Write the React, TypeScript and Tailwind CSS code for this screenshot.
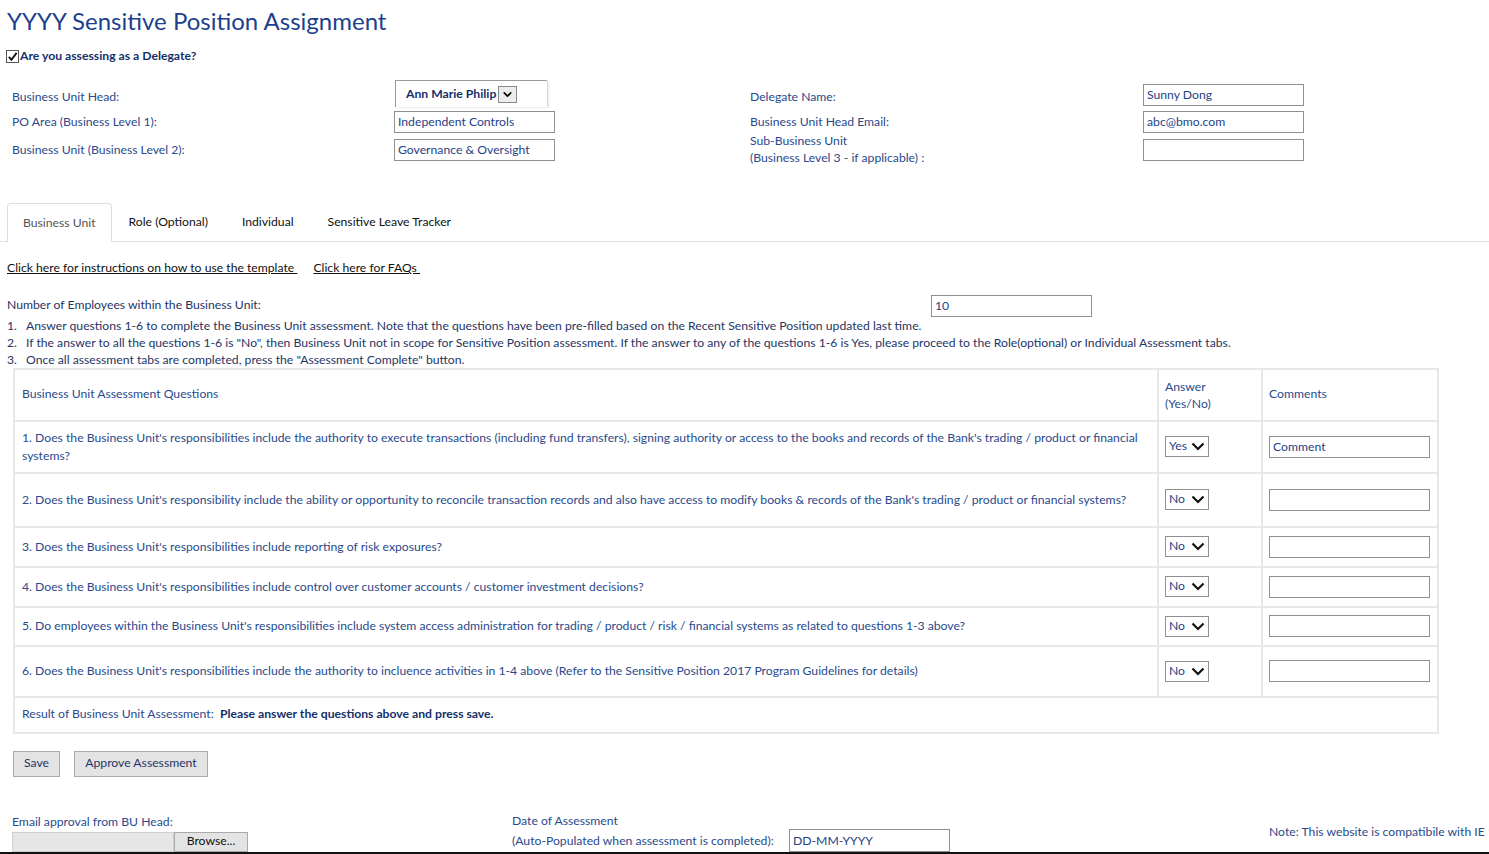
import React from 'react';
import { ChevronDown } from 'lucide-react';

const font = { fontFamily: 'Lato, "Liberation Sans", sans-serif' };

function TextBox({ value, className = '' }: { value?: string; className?: string }) {
  return (
    <div
      className={`h-[22px] w-[161px] border border-[#8f8f8f] bg-white pl-[3px] leading-[20px] text-[#1f3f86] ${className}`}
    >
      {value}
    </div>
  );
}

function Chevron() {
  return (
    <svg viewBox="0 0 14 9" className="h-[9px] w-[14px]">
      <path d="M1.5 1.5 L7 7 L12.5 1.5" fill="none" stroke="#111" strokeWidth="2.2" />
    </svg>
  );
}

function YesNo({ value }: { value: string }) {
  return (
    <div className="flex h-[21px] w-[44px] items-center justify-between border border-[#8f8f8f] bg-white pl-[3px] pr-[3px] text-[#1f3f86]">
      <span>{value}</span>
      <Chevron />
    </div>
  );
}

const questions = [
  {
    text: "1. Does the Business Unit's responsibilities include the authority to execute transactions (including fund transfers), signing authority or access to the books and records of the Bank's trading / product or financial systems?",
    answer: 'Yes',
    comment: 'Comment',
    h: 'h-[52px]',
  },
  {
    text: "2. Does the Business Unit's responsibility include the ability or opportunity to reconcile transaction records and also have access to modify books & records of the Bank's trading / product or financial systems?",
    answer: 'No',
    comment: '',
    h: 'h-[54px]',
  },
  {
    text: "3. Does the Business Unit's responsibilities include reporting of risk exposures?",
    answer: 'No',
    comment: '',
    h: 'h-[40px]',
  },
  {
    text: "4. Does the Business Unit's responsibilities include control over customer accounts / customer investment decisions?",
    answer: 'No',
    comment: '',
    h: 'h-[40px]',
  },
  {
    text: "5. Do employees within the Business Unit's responsibilities include system access administration for trading / product / risk / financial systems as related to questions 1-3 above?",
    answer: 'No',
    comment: '',
    h: 'h-[39px]',
  },
  {
    text: '6. Does the Business Unit\'s responsibilities include the authority to incluence activities in 1-4 above (Refer to the Sensitive Position 2017 Program Guidelines for details)',
    answer: 'No',
    comment: '',
    h: 'h-[51px]',
  },
];

export default function App() {
  return (
    <div className="flex h-screen flex-col overflow-hidden bg-white text-[12.2px] text-[#2a4a8c]" style={font}>
      <div className="flex-1">
        {/* Title */}
        <h1 className="pl-[7px] pt-[5px] text-[24px] leading-[32px] text-[#1e3f8c]">
          YYYY Sensitive Position Assignment
        </h1>

        <div className="mt-[10px] flex items-center pl-[6px]">
          <div className="flex h-[13px] w-[13px] items-center justify-center border border-[#555] bg-white">
            <svg viewBox="0 0 12 12" className="h-[11px] w-[11px]">
              <path d="M2 6.5 L4.8 9.5 L10.5 2" fill="none" stroke="#111" strokeWidth="2" />
            </svg>
          </div>
          <span className="ml-[1px] font-bold text-[#14306a]">Are you assessing as a Delegate?</span>
        </div>

        {/* Header form */}
        <div className="mt-[15px] grid grid-cols-[382px_161px_195px_393px_161px] pl-[12px]">
          <div className="flex h-[27px] items-center pt-[6px]">Business Unit Head:</div>
          <div className="h-[27px]">
            <div className="ml-[1px] flex h-[27px] w-[153px] items-center rounded-tr-[2px] border-l border-t border-r border-l-[#9a9a9a] border-t-[#9a9a9a] border-r-[#d8d8d8] pl-[10px] shadow-[1px_1px_2px_rgba(0,0,0,0.08)]">
              <span className="font-bold text-[#14306a]">Ann Marie Philip</span>
              <div className="ml-[2px] flex h-[17px] w-[19px] items-center justify-center border border-[#8a8a8a] bg-[#ececec]">
                <ChevronDown className="h-[13px] w-[13px] text-black" strokeWidth={3} />
              </div>
            </div>
          </div>
          <div />
          <div className="flex h-[27px] items-center pt-[6px]">Delegate Name:</div>
          <div className="flex h-[27px] items-start pt-[4px]">
            <TextBox value="Sunny Dong" />
          </div>

          <div className="mt-[4px] flex h-[21px] items-center pt-[1px]">PO Area (Business Level 1):</div>
          <div className="mt-[4px]">
            <TextBox value="Independent Controls" />
          </div>
          <div />
          <div className="mt-[4px] flex h-[21px] items-center pt-[1px]">Business Unit Head Email:</div>
          <div className="mt-[4px]">
            <TextBox value="abc@bmo.com" />
          </div>

          <div className="mt-[6px] flex h-[21px] items-center pt-[1px]">Business Unit (Business Level 2):</div>
          <div className="mt-[6px]">
            <TextBox value="Governance & Oversight" />
          </div>
          <div />
          <div className="-mt-[1px] leading-[17px]">
            Sub-Business Unit
            <br />
            (Business Level 3 - if applicable) :
          </div>
          <div className="mt-[6px]">
            <TextBox />
          </div>
        </div>

        {/* Tabs */}
        <div className="mt-[37px] flex h-[39px] items-end border-b border-[#dedede] pl-[7px]">
          <div className="-mb-px flex h-[39px] items-center rounded-t-[4px] border border-b-0 border-[#dedede] bg-white px-[15px] text-[#555]">
            Business Unit
          </div>
          <div className="flex h-[39px] items-center px-[17px] text-[#111]">Role (Optional)</div>
          <div className="flex h-[39px] items-center px-[17px] text-[#111]">Individual</div>
          <div className="flex h-[39px] items-center px-[17px] text-[#111]">Sensitive Leave Tracker</div>
        </div>

        {/* Links */}
        <div className="mt-[17px] flex gap-[16px] pl-[7px] text-[#111]">
          <span className="underline">Click here for instructions on how to use the template&nbsp;</span>
          <span className="underline">Click here for FAQs&nbsp;</span>
        </div>

        {/* Employees + instructions */}
        <div className="mt-[17px] flex items-center pl-[7px] text-[#1f3565]">
          <span className="w-[924px] shrink-0">Number of Employees within the Business Unit:</span>
          <TextBox value="10" />
        </div>
        <ol className="pl-[7px] leading-[17px] text-[#1f3565]">
          <li className="flex">
            <span className="w-[19px] shrink-0">1.</span>
            Answer questions 1-6 to complete the Business Unit assessment. Note that the questions have been pre-filled based on the Recent Sensitive Position updated last time.
          </li>
          <li className="flex">
            <span className="w-[19px] shrink-0">2.</span>
            If the answer to all the questions 1-6 is "No", then Business Unit not in scope for Sensitive Position assessment. If the answer to any of the questions 1-6 is Yes, please proceed to the Role(optional) or Individual Assessment tabs.
          </li>
          <li className="flex">
            <span className="w-[19px] shrink-0">3.</span>
            Once all assessment tabs are completed, press the "Assessment Complete" button.
          </li>
        </ol>

        {/* Assessment table */}
        <table className="ml-[13px] w-[1426px] border-collapse border-2 border-[#e8e8e8]">
          <tbody>
            <tr className="h-[52px]">
              <td className="w-[1144px] border-2 border-[#e8e8e8] pl-[7px]">Business Unit Assessment Questions</td>
              <td className="w-[104px] border-2 border-[#e8e8e8] pl-[6px] leading-[17px]">
                Answer
                <br />
                (Yes/No)
              </td>
              <td className="border-2 border-[#e8e8e8] pl-[6px]">Comments</td>
            </tr>
            {questions.map((q) => (
              <tr key={q.text} className={q.h}>
                <td className="border-2 border-[#e8e8e8] pl-[7px] pr-[10px] leading-[18px]">{q.text}</td>
                <td className="border-2 border-[#e8e8e8] pl-[6px]">
                  <YesNo value={q.answer} />
                </td>
                <td className="border-2 border-[#e8e8e8] pl-[6px]">
                  <TextBox value={q.comment} />
                </td>
              </tr>
            ))}
            <tr className="h-[36px]">
              <td colSpan={3} className="border-2 border-[#e8e8e8] pl-[7px]">
                Result of Business Unit Assessment:&nbsp;&nbsp;
                <span className="font-bold text-[#14306a]">Please answer the questions above and press save.</span>
              </td>
            </tr>
          </tbody>
        </table>

        {/* Buttons */}
        <div className="ml-[13px] mt-[17px] flex gap-[14px]">
          <button className="h-[26px] w-[47px] border border-[#a9a9a9] bg-[#e3e3e3] text-[#1f3565]">Save</button>
          <button className="h-[26px] w-[134px] border border-[#a9a9a9] bg-[#e3e3e3] text-[#1f3565]">
            Approve Assessment
          </button>
        </div>

        {/* Bottom row */}
        <div className="mt-[36px] flex items-start">
          <div className="ml-[12px] w-[500px] shrink-0">
            <div className="leading-[17px]">Email approval from BU Head:</div>
            <div className="mt-[2px] flex h-[20px]">
              <div className="w-[162px] border border-[#cfcfcf] bg-[#e6e6e6]" />
              <div className="flex w-[74px] items-center justify-center border border-[#a9a9a9] bg-[#e3e3e3] text-[#111]">
                Browse...
              </div>
            </div>
          </div>
          <div className="-mt-[2px] shrink-0 leading-[20px]">
            <div>Date of Assessment</div>
            <div className="flex items-center">
              <span className="w-[277px] shrink-0">(Auto-Populated when assessment is completed):</span>
              <div className="-mt-[2px] h-[23px] w-[161px] border border-[#8f8f8f] pl-[3px] leading-[21px] text-[#1f3f86]">
                DD-MM-YYYY
              </div>
            </div>
          </div>
          <div className="ml-[319px] shrink-0 whitespace-nowrap pt-[10px]">Note: This website is compatibile with IE 11</div>
        </div>
      </div>
      <div className="h-[3px] shrink-0 bg-[#111]" />
    </div>
  );
}
